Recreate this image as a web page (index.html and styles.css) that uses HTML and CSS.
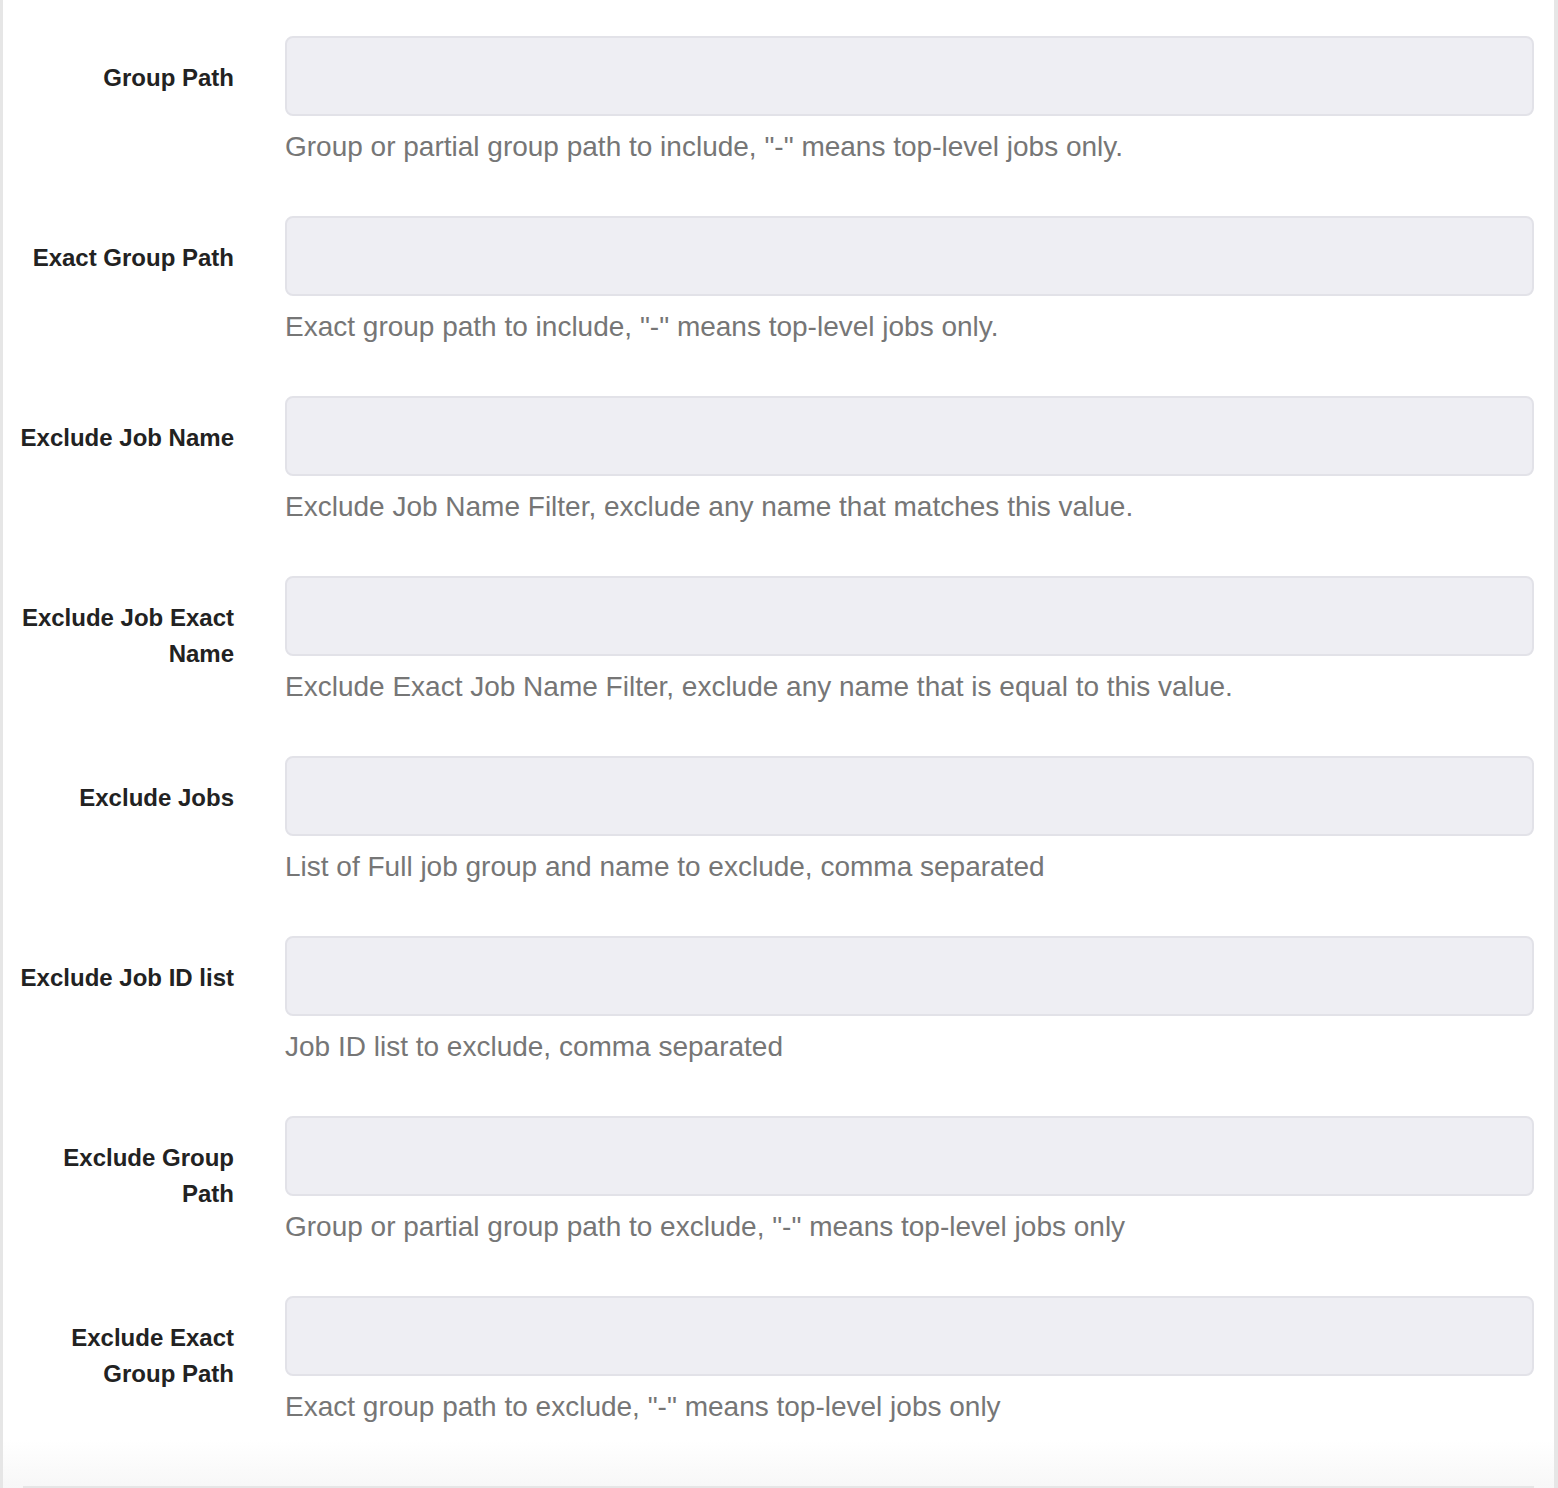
FILE: index.html
```html
<!DOCTYPE html>
<html>
<head>
<meta charset="utf-8">
<link rel="stylesheet" href="styles.css">
</head>
<body>
<div class="panel">
  <div class="form">
    <div class="row">
      <label class="label">Group Path</label>
      <div class="field"><div class="input"></div><div class="help">Group or partial group path to include, "-" means top-level jobs only.</div></div>
    </div>
    <div class="row">
      <label class="label">Exact Group Path</label>
      <div class="field"><div class="input"></div><div class="help">Exact group path to include, "-" means top-level jobs only.</div></div>
    </div>
    <div class="row">
      <label class="label">Exclude Job Name</label>
      <div class="field"><div class="input"></div><div class="help">Exclude Job Name Filter, exclude any name that matches this value.</div></div>
    </div>
    <div class="row">
      <label class="label">Exclude Job Exact Name</label>
      <div class="field"><div class="input"></div><div class="help">Exclude Exact Job Name Filter, exclude any name that is equal to this value.</div></div>
    </div>
    <div class="row">
      <label class="label">Exclude Jobs</label>
      <div class="field"><div class="input"></div><div class="help">List of Full job group and name to exclude, comma separated</div></div>
    </div>
    <div class="row">
      <label class="label">Exclude Job ID list</label>
      <div class="field"><div class="input"></div><div class="help">Job ID list to exclude, comma separated</div></div>
    </div>
    <div class="row">
      <label class="label">Exclude Group Path</label>
      <div class="field"><div class="input"></div><div class="help">Group or partial group path to exclude, "-" means top-level jobs only</div></div>
    </div>
    <div class="row">
      <label class="label">Exclude Exact Group Path</label>
      <div class="field"><div class="input"></div><div class="help">Exact group path to exclude, "-" means top-level jobs only</div></div>
    </div>
  </div>
  <div class="footer"><div class="footer-line"></div></div>
</div>
</body>
</html>
```
FILE: styles.css
```css
html, body {
  margin: 0;
  padding: 0;
  background: #ffffff;
}
body {
  font-family: "Liberation Sans", Arial, Helvetica, sans-serif;
}
.panel {
  width: 1558px;
  min-height: 1488px;
  box-sizing: border-box;
  border-left: 3px solid #e6e6e6;
  border-right: 4px solid #e6e6e6;
  display: flex;
  flex-direction: column;
}
.form {
  display: flex;
  flex-direction: column;
}
.row {
  display: grid;
  grid-template-columns: 231px 1fr;
  column-gap: 51px;
  padding: 36px 20px 12px 0;
  height: 180px;
  box-sizing: border-box;
}
.label {
  text-align: right;
  font-weight: bold;
  font-size: 24px;
  line-height: 36px;
  color: #222222;
  padding-top: 24px;
  padding-left: 11px;
}
.field {
  display: flex;
  flex-direction: column;
}
.input {
  height: 80px;
  box-sizing: border-box;
  background: #eeeef3;
  border: 2px solid #e2e2e8;
  border-radius: 8px;
}
.help {
  margin-top: 10px;
  font-size: 28px;
  line-height: 42px;
  color: #767676;
}
.footer {
  flex: 1;
  background: linear-gradient(#ffffff, #f7f7f7);
  display: flex;
  align-items: flex-end;
  padding: 0 20px 0 20px;
}
.footer-line {
  flex: 1;
  height: 2px;
  background: #e6e6e6;
}
```
